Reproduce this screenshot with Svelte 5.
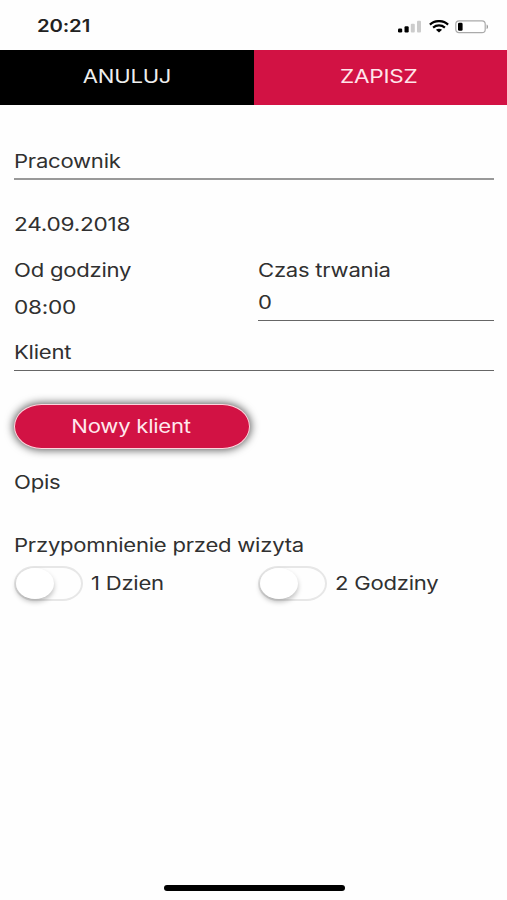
<script>
  let employee = $state('Pracownik');
  const reminders = [
    { label: '1 Dzien', width: 'day' },
    { label: '2 Godziny', width: 'hours' }
  ];
</script>

<main class="screen">
  <header class="status">
    <span class="wide clock">20:21</span>
    <div class="indicators">
      <svg class="signal" width="24" height="13" viewBox="0 0 24 13">
        <rect x="0" y="8.5" width="4.2" height="4" rx="1.2" fill="#000" />
        <rect x="6.5" y="6.3" width="4.2" height="6.2" rx="1.2" fill="#000" />
        <rect x="12.8" y="3.7" width="4" height="8.8" rx="1" fill="#ccc" />
        <rect x="19" y="0.8" width="4" height="11.7" rx="1" fill="#ccc" />
      </svg>
      <svg class="wifi" width="20" height="13" viewBox="0 0 20 13">
        <g fill="none" stroke="#000" stroke-width="2.2">
          <path d="M0.9 4.6C6 -0.1 14 -0.1 19.1 4.6" />
          <path d="M4.1 7.6C7.5 4.7 12.5 4.7 15.9 7.6" />
        </g>
        <path d="M6.9 9.8C8.7 8.4 11.3 8.4 13.1 9.8L10 12.5Z" fill="#000" />
      </svg>
      <svg class="battery" width="34" height="14" viewBox="0 0 34 14">
        <rect x="0.8" y="0.9" width="29.4" height="11.8" rx="3.2" fill="#fff" stroke="#aaa" stroke-width="1.2" />
        <rect x="3" y="2.8" width="4.6" height="8" rx="1.3" fill="#000" />
        <path d="M31.6 4.5C33.5 5.1 33.5 8.5 31.6 9.1Z" fill="#999" />
      </svg>
    </div>
  </header>

  <nav class="actions">
    <button class="cancel"><span class="wide anuluj">ANULUJ</span></button>
    <button class="save"><span class="wide zapisz">ZAPISZ</span></button>
  </nav>

  <form class="form">
    <div class="field employee"><span class="wide">{employee}</span></div>
    <div class="date"><span class="wide digits">24.09.2018</span></div>
    <div class="columns">
      <div class="start">
        <div class="label"><span class="wide">Od godziny</span></div>
        <div class="time"><span class="wide digits">08:00</span></div>
      </div>
      <div class="duration">
        <div class="label"><span class="wide">Czas trwania</span></div>
        <div class="field amount"><span class="wide">0</span></div>
      </div>
    </div>
    <div class="field client"><span class="wide">Klient</span></div>
    <button type="button" class="new-client"><span class="wide">Nowy klient</span></button>
    <div class="description"><span class="wide">Opis</span></div>
    <div class="reminder-title"><span class="wide">Przypomnienie przed wizyta</span></div>
    <div class="reminders">
      {#each reminders as item}
        <div class="reminder">
          <span class="toggle"><span class="knob"></span></span>
          <span class="wide {item.width}">{item.label}</span>
        </div>
      {/each}
    </div>
  </form>

  <footer><div class="home"></div></footer>
</main>

<style>
  :global(body) { background: #fefefe; }
  .screen {
    width: 507px;
    height: 900px;
    display: flex;
    flex-direction: column;
    overflow: hidden;
    background: #fefefe;
    color: #303030;
    font: 400 18.5px/24px Inter, "Liberation Sans", sans-serif;
    letter-spacing: -.2px;
  }
  .wide {
    display: inline-block;
    white-space: nowrap;
    transform: scaleX(1.193);
    transform-origin: left center;
  }
  .digits { transform: scaleX(1.222); }
  .status {
    box-sizing: border-box;
    height: 50px;
    flex: none;
    display: flex;
    justify-content: space-between;
    padding: 14px 18px 0 37px;
  }
  .clock { font-size: 17px; font-weight: 600; color: #222; letter-spacing: -.1px; }
  .indicators { display: flex; height: 14px; margin-top: 5.5px; }
  .signal { margin-right: 7px; }
  .wifi { margin-right: 6px; }
  .actions { display: flex; height: 54.5px; flex: none; }
  button { border: 0; margin: 0; padding: 0; font: inherit; letter-spacing: inherit; color: #fff; }
  .actions button { flex: 1; padding-bottom: 2px; }
  .actions .wide, .new-client .wide { transform-origin: center; }
  .cancel { background: #000; color: #eee; }
  .save { background: #d21244; color: #ffe5ea; }
  .actions .zapisz { margin-right: 3px; transform: scaleX(1.22); }
  .form { padding: 0 13px 0 14px; flex: 1; }
  .field { box-sizing: border-box; border-bottom: 1.5px solid #666; }
  .employee { height: 75px; padding-top: 44px; border-bottom: 2px solid #999; }
  .date { height: 78px; padding-top: 32px; box-sizing: border-box; }
  .columns { display: grid; grid-template-columns: 235px 236px; column-gap: 9px; height: 82px; }
  .label { height: 24px; }
  .time { padding-top: 13px; }
  .amount { height: 39px; padding-top: 8.5px; }
  .client { height: 31px; }
  .new-client {
    display: block;
    box-sizing: border-box;
    width: 236px;
    height: 45px;
    margin-top: 33px;
    border: 1.5px solid #ffd4dd;
    border-radius: 28px / 23px;
    background: #d21244;
    box-shadow: 0 0 8px 1px rgba(0, 0, 0, .65);
    color: #ffe8ed;
  }
  .new-client .wide { margin-right: 2px; }
  .description { margin-top: 21px; }
  .reminder-title { margin-top: 39px; }
  .reminders { display: grid; grid-template-columns: 244px 1fr; margin-top: 10px; }
  .reminder { display: flex; align-items: center; gap: 8px; height: 33px; }
  .toggle {
    box-sizing: border-box;
    width: 69px;
    height: 35px;
    padding: 1px;
    border: 2px solid #e7e7e7;
    border-radius: 21px / 18px;
    background: #fefefe;
  }
  .knob {
    display: block;
    width: 38px;
    height: 31px;
    margin: -1px;
    border-radius: 50%;
    background: #fff;
    box-shadow: 0 3px 5px rgba(0, 0, 0, .25);
  }
  footer { height: 15px; flex: none; display: flex; justify-content: center; }
  .home { width: 181px; height: 6px; margin-left: 1px; border-radius: 3px; background: #000; }
</style>
